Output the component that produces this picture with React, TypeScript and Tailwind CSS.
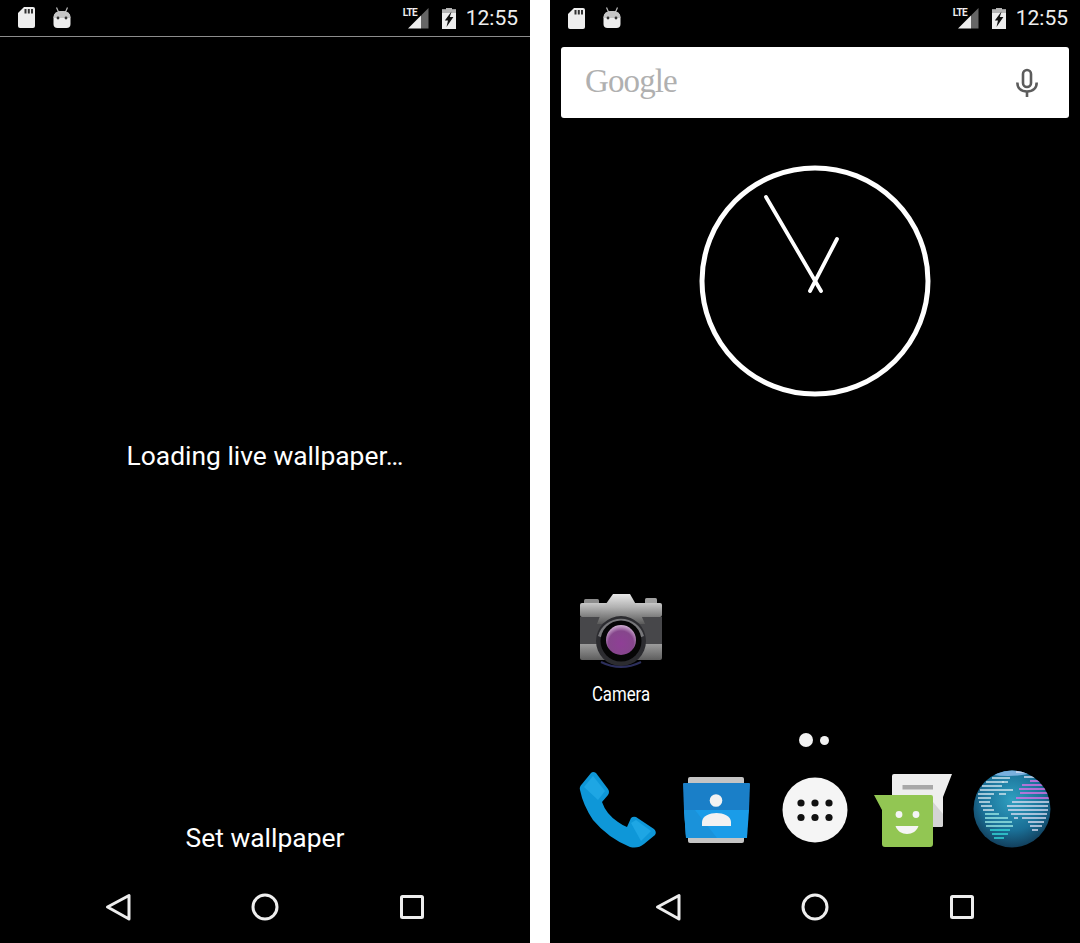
const leftStripes = [
  [20, 38, 9], [14, 32, 13], [30, 36, 13], [10, 30, 17], [8, 41, 21], [6, 22, 25], [27, 34, 25], [6, 19, 29], [7, 18, 33], [9, 20, 37], [11, 22, 41],
];
const rightStripes = [
  [44, 62, 3], [52, 70, 8], [58, 74, 12], [50, 76, 16], [47, 77, 20], [48, 78, 24], [44, 78, 29], [40, 77, 33], [35, 76, 37], [36, 76, 41],
  [39, 75, 45], [42, 46, 49], [50, 74, 49], [56, 72, 53], [58, 70, 57], [60, 66, 61],
];
const tealStripes = [
  [13, 27, 45], [13, 36, 49], [13, 40, 53], [14, 41, 57], [18, 38, 61], [20, 36, 65], [22, 32, 69],
];

const Back = () => (
  <svg width="30" height="30" viewBox="0 0 30 30" fill="none" stroke="#eeeeee" strokeWidth="3" strokeLinejoin="round">
    <path d="M4.5 15 L26 3.5 V27 Z" />
  </svg>
);

const NavBar = () => (
  <div className="mt-auto flex h-[72px] items-center justify-center gap-[117px]">
    <Back />
    <svg width="30" height="30" viewBox="0 0 30 30" fill="none" stroke="#eeeeee" strokeWidth="3">
      <circle cx="15" cy="15" r="12" />
    </svg>
    <svg width="30" height="30" viewBox="0 0 30 30" fill="none" stroke="#eeeeee" strokeWidth="3" strokeLinejoin="round">
      <rect x="4.5" y="4.5" width="21" height="21" rx="1" />
    </svg>
  </div>
);

const StatusBar = ({ line }: { line?: boolean }) => (
  <div className={`flex h-[37px] shrink-0 items-center pl-[18px] pr-[12px] ${line ? "border-b border-[#8c8c8c]" : ""}`}>
    <svg width="17" height="21" viewBox="0 0 17 21" className="mb-[1px]">
      <path d="M6 0 H15 Q17 0 17 2 V19 Q17 21 15 21 H2 Q0 21 0 19 V6 Z" fill="#eeeeee" />
      <rect x="6.5" y="2" width="2" height="4.5" fill="#333" />
      <rect x="9.8" y="2" width="2" height="4.5" fill="#333" />
      <rect x="13" y="2" width="2" height="4.5" fill="#333" />
    </svg>
    <svg width="18" height="22" viewBox="0 0 18 22" className="ml-[18px] mb-[1px]">
      <path d="M3.5 0.5 L5.5 5 M14.5 0.5 L12.5 5" stroke="#bbbbbb" strokeWidth="1.2" />
      <path d="M0.5 11 Q0.5 4 9 4 Q17.5 4 17.5 11 V17 Q17.5 21 13.5 21 H4.5 Q0.5 21 0.5 17 Z" fill="#eeeeee" />
      <path d="M0.5 11 Q0.5 4 9 4 Q17.5 4 17.5 11 Z" fill="#c6c6c6" />
      <circle cx="5" cy="11" r="1.4" fill="#333" />
      <circle cx="13" cy="11" r="1.4" fill="#333" />
    </svg>
    <div className="relative ml-auto h-[21px] w-[26px]">
      <svg width="21" height="21" viewBox="0 0 21 21" className="absolute right-0 top-0">
        <path d="M0 20.5 L13 7.5 V20.5 Z" fill="#eeeeee" />
        <path d="M13 7.5 L20.5 0 V20.5 H13 Z" fill="#666666" />
      </svg>
      <span className="absolute left-0 top-[-1px] text-[10px] font-bold leading-[12px] tracking-[-0.6px] text-[#eeeeee]">
        LTE
      </span>
    </div>
    <svg width="14" height="21" viewBox="0 0 14 21" className="ml-[13px]">
      <path d="M4 0 H10 V1.5 H14 V21 H0 V1.5 H4 Z" fill="#eeeeee" />
      <path d="M4 0 H10 V1.5 H14 V5 H0 V1.5 H4 Z" fill="#b5b5b5" />
      <path d="M9.5 3.5 L2.8 12.5 H6 L4.5 19 L11.4 9 H7.8 Z" fill="#111" />
    </svg>
    <span className="ml-[10px] text-[21px] leading-none text-[#eeeeee]">12:55</span>
  </div>
);

const Mic = () => (
  <svg width="24" height="30" viewBox="0 0 24 30" fill="none" stroke="#5c5c5c" strokeWidth="2.6">
    <rect x="8" y="2" width="8" height="17" rx="4" />
    <path d="M2.3 14.5 C2.3 20 6 23.5 12 23.5 C18 23.5 21.7 20 21.7 14.5" />
    <path d="M12 23 V29" />
  </svg>
);

const Clock = () => (
  <svg width="240" height="240" viewBox="0 0 240 240" fill="none" stroke="#ffffff" strokeLinecap="round" className="mx-auto mt-[43px]">
    <circle cx="120" cy="120" r="113" strokeWidth="5" />
    <path d="M71 36 L126 130" strokeWidth="3.8" />
    <path d="M142 78 L115 130" strokeWidth="3.8" />
  </svg>
);

const CameraIcon = () => (
  <svg width="84" height="76" viewBox="0 0 84 76" className="mx-auto">
    <defs>
      <linearGradient id="camTop" x1="0" y1="0" x2="0" y2="1">
        <stop offset="0" stopColor="#c8c8c8" />
        <stop offset="1" stopColor="#7c7c7c" />
      </linearGradient>
      <linearGradient id="camBottom" x1="0" y1="0" x2="0" y2="1">
        <stop offset="0" stopColor="#9c9c9c" />
        <stop offset="1" stopColor="#5e5e5e" />
      </linearGradient>
      <linearGradient id="camPrism" x1="0" y1="0" x2="0" y2="1">
        <stop offset="0" stopColor="#e8e8e8" />
        <stop offset="0.45" stopColor="#b0b0b0" />
        <stop offset="1" stopColor="#5a5a5a" />
      </linearGradient>
      <radialGradient id="camLens" cx="0.5" cy="0.62" r="0.6">
        <stop offset="0" stopColor="#8f3f96" />
        <stop offset="0.7" stopColor="#86468c" />
        <stop offset="1" stopColor="#c9a6cc" />
      </radialGradient>
    </defs>
    <rect x="5" y="5" width="15" height="6" rx="1.5" fill="#8c8c8c" />
    <rect x="66" y="4" width="12" height="7" rx="1.5" fill="#a0a0a0" />
    <rect x="1" y="9" width="82" height="14" rx="2" fill="url(#camTop)" />
    <rect x="1" y="23" width="82" height="27" fill="#47474a" />
    <path d="M1 50 H83 V64 Q83 66 81 66 H3 Q1 66 1 64 Z" fill="url(#camBottom)" />
    <path d="M24 14 L34 0 H51 L59 14 L66 30 H18 Z" fill="url(#camPrism)" />
    <circle cx="42" cy="47" r="25" fill="#2c2c30" />
    <path d="M19 42 A24 24 0 0 1 65 42 L60 44 A19 19 0 0 0 24 44 Z" fill="#77777a" />
    <circle cx="42" cy="47" r="20.5" fill="#060606" />
    <circle cx="42" cy="46" r="15" fill="url(#camLens)" />
    <path d="M22 68 Q42 78 62 68" fill="none" stroke="#2c2f5c" strokeWidth="2" />
  </svg>
);

const PhoneIcon = () => (
  <svg width="80" height="80" viewBox="0 0 80 80" className="mx-auto">
    <path
      d="M2 20 Q1 17 4 14 L13 3 Q15 1 18 3 L30 19 Q32 22 30 25 L24 32 Q28 44 40 52 Q44 55 49 57 L53 48 Q55 46 58 47 L76 59 Q79 62 77 65 L66 74 Q60 79 52 77 Q30 68 15 50 Q5 35 2 20 Z"
      fill="#0e97d8"
    />
    <path d="M6 17 L15 6 L27 21 L20 30 Z" fill="#1ea6e4" />
    <path d="M53 53 L58 50 L73 61 L63 71 Z" fill="#1ea6e4" />
  </svg>
);

const ContactsIcon = () => (
  <svg width="67" height="66" viewBox="0 0 67 66" className="mx-auto">
    <rect x="5" y="0" width="56" height="66" rx="2" fill="#c4c4c4" />
    <path d="M1 6 H66 Q67 6 67 7 L66 33 H1 L0 7 Q0 6 1 6 Z" fill="#1a7fc8" />
    <path d="M1 33 H66 L64 61 H3 Z" fill="#1a9ce8" />
    <path d="M1 33 H12 L34 61 H3 Z" fill="#1a92da" />
    <circle cx="33" cy="23.5" r="6.3" fill="#f2f2f2" />
    <path d="M19 49 V45 C19 39 27 36 33.5 36 C40 36 48 39 48 45 V49 Z" fill="#f2f2f2" />
  </svg>
);

const LauncherIcon = () => (
  <svg width="66" height="66" viewBox="0 0 66 66" className="mx-auto">
    <circle cx="33" cy="33" r="32.5" fill="#f5f5f5" />
    <g fill="#111">
      <circle cx="19" cy="26" r="3.6" />
      <circle cx="33" cy="26" r="3.6" />
      <circle cx="47" cy="26" r="3.6" />
      <circle cx="19" cy="40.5" r="3.6" />
      <circle cx="33" cy="40.5" r="3.6" />
      <circle cx="47" cy="40.5" r="3.6" />
    </g>
  </svg>
);

const MessengerIcon = () => (
  <svg width="78" height="74" viewBox="0 0 78 74" className="mx-auto mt-[1px]">
    <path d="M18 2 Q18 0 20 0 H78 L69 23 V51 Q69 53 67 53 H20 Q18 53 18 51 Z" fill="#eeeeee" />
    <rect x="28.5" y="11" width="30.5" height="4.5" fill="#a8a8a8" />
    <path d="M59 28 L69 40 V51 Q69 53 67 53 H59 Z" fill="#d4d4d4" />
    <path d="M0 21 H57 Q59 21 59 23 V70 Q59 73 56 73 H11 Q8 73 8 70 V36 Z" fill="#92c653" />
    <circle cx="25" cy="40.5" r="3.4" fill="#f5f5f5" />
    <circle cx="42" cy="40.5" r="3.4" fill="#f5f5f5" />
    <path d="M21.5 52 H44.5 C43 57 38 60 33 60 C28 60 23 57 21.5 52 Z" fill="#f5f5f5" />
  </svg>
);

const GlobeIcon = () => (
  <svg width="80" height="80" viewBox="0 1 80 80" className="mx-auto">
    <defs>
      <radialGradient id="globeFill" cx="0.5" cy="0.38" r="0.62">
        <stop offset="0" stopColor="#2f9fc0" />
        <stop offset="0.65" stopColor="#1a6f96" />
        <stop offset="1" stopColor="#123f5c" />
      </radialGradient>
      <clipPath id="globeClip">
        <circle cx="40" cy="40" r="38.5" />
      </clipPath>
    </defs>
    <circle cx="40" cy="40" r="38.5" fill="url(#globeFill)" />
    <g clipPath="url(#globeClip)" strokeWidth="1.7">
      <ellipse cx="36" cy="3" rx="22" ry="4" fill="#7ab0de" />
      <path d="M52 2 L72 10" stroke="#d85be6" />
      {leftStripes.map(([a, b, y]) => (
        <path key={`l${y}${a}`} d={`M${a} ${y} H${b}`} stroke="#cfe4ee" />
      ))}
      {rightStripes.map(([a, b, y]) => (
        <path key={`r${y}${a}`} d={`M${a} ${y} H${b}`} stroke={y < 30 && b > 70 ? "#e070e8" : "#d8dcf0"} />
      ))}
      {tealStripes.map(([a, b, y]) => (
        <path key={`t${y}`} d={`M${a} ${y} H${b}`} stroke={y > 60 ? "#35d8d8" : "#9ae8e4"} />
      ))}
    </g>
  </svg>
);

export default function App() {
  return (
    <div className="flex h-[943px] w-[1080px] bg-white font-['Roboto',sans-serif] text-white">
      {/* wallpaper preview */}
      <div className="flex h-full w-[530px] flex-col bg-black">
        <StatusBar line />
        <p className="mt-[403px] text-center text-[26.4px] leading-8">Loading live wallpaper…</p>
        <p className="mt-[350px] text-center text-[26.4px] leading-8">Set wallpaper</p>
        <NavBar />
      </div>

      {/* home screen */}
      <div className="ml-[20px] flex h-full w-[530px] flex-col bg-black">
        <StatusBar />
        <div className="mx-[11px] mt-[10px] flex h-[71px] items-center justify-between rounded-[3px] bg-white pl-[24px] pr-[30px]">
          <span className="mb-[2px] font-['Liberation_Serif',serif] text-[33px] leading-none tracking-[-0.9px] text-[#b0b0b0]">Google</span>
          <Mic />
        </div>
        <Clock />
        <div className="ml-[21px] mt-[193px] w-[100px]">
          <CameraIcon />
          <p className="mt-[12px] scale-x-[0.84] text-center text-[20px] leading-6">Camera</p>
        </div>
        <div className="mt-[27px] flex items-center justify-center gap-[7px] pr-[3px]">
          <span className="h-[14px] w-[14px] rounded-full bg-[#f2f2f2]" />
          <span className="h-[9px] w-[9px] rounded-full bg-[#f2f2f2]" />
        </div>
        <div className="mt-[23px] grid grid-cols-5 items-center px-[19px]">
          <PhoneIcon />
          <ContactsIcon />
          <LauncherIcon />
          <MessengerIcon />
          <GlobeIcon />
        </div>
        <NavBar />
      </div>
    </div>
  );
}
